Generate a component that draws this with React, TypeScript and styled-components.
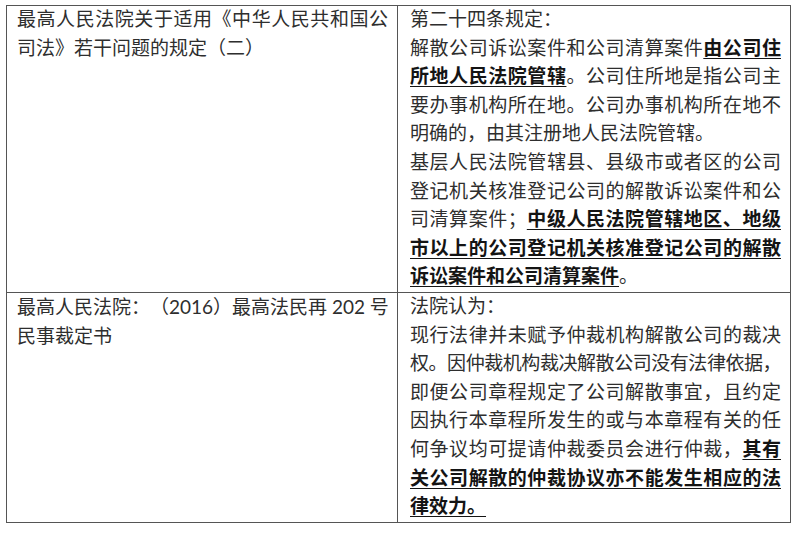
import styled, { createGlobalStyle } from 'styled-components';

const GlobalStyle = createGlobalStyle`
  html, body {
    margin: 0;
    background: #ffffff;
  }
`;

const Page = styled.div`
  padding: 5px 0 0 6px;
`;

const Table = styled.div`
  display: grid;
  grid-template-columns: 391px 393px;
  width: max-content;
  border-top: 1.5px solid #555555;
  border-left: 1.5px solid #555555;
  font-family: "Liberation Serif", "Noto Sans CJK SC", serif;
  font-size: 19px;
  line-height: 28.6px;
  color: #2e2e2e;
  text-spacing-trim: space-all;
`;

const Cell = styled.div<{ $right?: boolean }>`
  box-sizing: border-box;
  min-width: 0;
  border-right: 1.5px solid #555555;
  border-bottom: 1.5px solid #555555;
  padding: ${(p) => (p.$right ? '0 9px 0 12px' : '0 9px 0 10px')};
`;

const Line = styled.div<{ $full?: boolean; $tight?: boolean }>`
  text-align: justify;
  text-align-last: ${(p) => (p.$full ? 'justify' : 'left')};
  letter-spacing: ${(p) => (p.$tight ? '-0.6px' : 'normal')};
  white-space: nowrap;
`;

const Emph = styled.strong`
  font-weight: 700;
  color: #141414;
  text-decoration: underline;
  text-decoration-thickness: 1px;
  text-underline-offset: 3px;
`;

const Latin = styled.span`
  font-family: "Lato", "Noto Sans CJK SC", sans-serif;
`;

export default function App() {
  return (
    <>
      <GlobalStyle />
      <Page>
        <Table>
          <Cell>
            <Line $full>最高人民法院关于适用《中华人民共和国公</Line>
            <Line>司法》若干问题的规定（二）</Line>
          </Cell>
          <Cell $right>
            <Line>第二十四条规定：</Line>
            <Line $full>
              解散公司诉讼案件和公司清算案件<Emph>由公司住</Emph>
            </Line>
            <Line $full>
              <Emph>所地人民法院管辖</Emph>。公司住所地是指公司主
            </Line>
            <Line $full>要办事机构所在地。公司办事机构所在地不</Line>
            <Line>明确的，由其注册地人民法院管辖。</Line>
            <Line $full>基层人民法院管辖县、县级市或者区的公司</Line>
            <Line $full>登记机关核准登记公司的解散诉讼案件和公</Line>
            <Line $full>
              司清算案件；<Emph>中级人民法院管辖地区、地级</Emph>
            </Line>
            <Line $full>
              <Emph>市以上的公司登记机关核准登记公司的解散</Emph>
            </Line>
            <Line>
              <Emph>诉讼案件和公司清算案件</Emph>。
            </Line>
          </Cell>
          <Cell>
            <Line $full>
              最高人民法院：（<Latin>2016</Latin>）最高法民再 <Latin>202</Latin> 号
            </Line>
            <Line>民事裁定书</Line>
          </Cell>
          <Cell $right>
            <Line>法院认为：</Line>
            <Line $full>现行法律并未赋予仲裁机构解散公司的裁决</Line>
            <Line $full $tight>
              权。因仲裁机构裁决解散公司没有法律依据，
            </Line>
            <Line $full>即便公司章程规定了公司解散事宜，且约定</Line>
            <Line $full>因执行本章程所发生的或与本章程有关的任</Line>
            <Line $full>
              何争议均可提请仲裁委员会进行仲裁，<Emph>其有</Emph>
            </Line>
            <Line $full>
              <Emph>关公司解散的仲裁协议亦不能发生相应的法</Emph>
            </Line>
            <Line>
              <Emph>律效力。</Emph>
            </Line>
          </Cell>
        </Table>
      </Page>
    </>
  );
}
